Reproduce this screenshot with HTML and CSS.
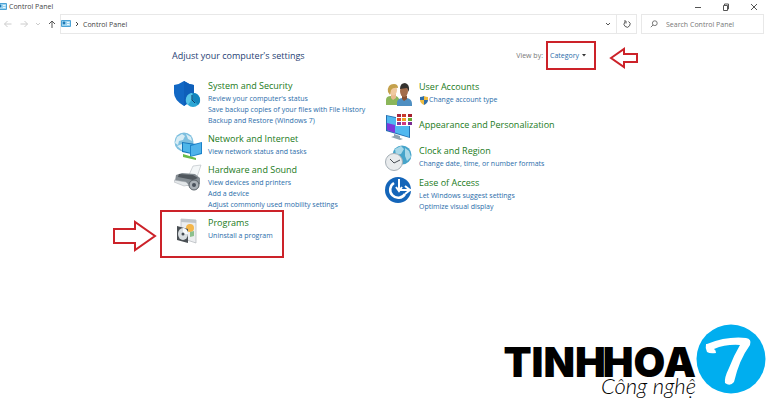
FILE: index.html
```html
<!DOCTYPE html>
<html lang="en">
<head>
<meta charset="UTF-8">
<meta name="viewport" content="width=device-width, initial-scale=1.0">
<title>Control Panel</title>
<link rel="stylesheet" href="styles.css">
</head>
<body>

<!-- shared icon -->
<svg class="defs" width="0" height="0" aria-hidden="true">
    <symbol id="panel" viewBox="0 0 10 8">
        <rect width="10" height="7" rx="1" fill="#4ba3d6"/>
        <rect x="1" y="1" width="8" height="5" fill="#9bd3f0"/>
        <circle cx="3" cy="3" r="1.4" fill="#1f78b4"/>
        <path d="M6 2.5h2.5M6 4.5h2.5" stroke="#fff" stroke-width=".8"/>
    </symbol>
</svg>

<!-- Title bar -->
<header class="titlebar">
    <svg class="panel-icon" width="10" height="8"><use href="#panel"/></svg>
    <span class="window-title">Control Panel</span>
    <div class="window-buttons">
        <button aria-label="Minimize"><svg width="8" height="8"><path d="M1 4.5h6"/></svg></button>
        <button aria-label="Restore"><svg width="8" height="8"><path d="M1.5 2.5h4v5h-4zM2.5 2.5V1h4v5h-1"/></svg></button>
        <button aria-label="Close"><svg width="8" height="8"><path d="M1 1l6 6M7 1l-6 6"/></svg></button>
    </div>
</header>

<!-- Navigation -->
<nav class="navbar">
    <div class="history">
        <button class="off" aria-label="Back"><svg width="8" height="8"><path d="M7.5 4h-7M3.5 1l-3 3 3 3"/></svg></button>
        <button class="off" aria-label="Forward"><svg width="8" height="8"><path d="M.5 4h7M4.5 1l3 3-3 3"/></svg></button>
        <button class="off" aria-label="Recent"><svg width="4" height="8"><path d="M0 3l2 2 2-2"/></svg></button>
        <button aria-label="Up"><svg width="8" height="8"><path d="M4 8V1M1 4l3-3 3 3"/></svg></button>
    </div>
    <div class="address">
        <svg width="10" height="8"><use href="#panel"/></svg>
        <svg class="line" width="4" height="8"><path d="M1 2l2 2-2 2"/></svg>
        <a href="#">Control Panel</a>
        <button class="drop" aria-label="Previous locations"><svg width="6" height="8"><path d="M1 3l2 2 2-2"/></svg></button>
        <button class="refresh" aria-label="Refresh"><svg width="8" height="8"><path d="M5.5 1.5A3 3 0 1 1 2 2M1 1h2v2.5"/></svg></button>
    </div>
    <label class="search">
        <svg class="line" width="8" height="8"><circle cx="4.8" cy="3.2" r="2.4"/><path d="M3 5L.8 7.2"/></svg>
        <input type="text" placeholder="Search Control Panel" aria-label="Search Control Panel">
    </label>
</nav>

<main class="content">
    <div class="heading">
        <h1>Adjust your computer's settings</h1>
        <div class="view">
            <label for="view">View by:</label>
            <div class="marked mark-view">
                <select id="view"><option>Category</option></select>
                <svg class="caret" width="4" height="3"><path d="M0 0h4L2 2.5z"/></svg>
                <svg class="arrow arrow-left" width="30" height="22"><path d="M2 11l13-9v5h13v8H15v5z"/></svg>
            </div>
        </div>
    </div>

    <div class="categories">
        <div class="column">
            <section class="category">
                <svg class="icon" viewBox="0 0 28 28">
                    <path d="M0 6Q6 5 10 2q4 3 10 4v8q0 7-10 13Q0 21 0 14z" fill="#1268c4"/>
                    <path d="M10 2q4 3 10 4v8q0 7-10 13z" fill="#0e5fba"/>
                    <circle cx="19" cy="21" r="7" fill="#2ba6d4"/>
                    <path d="M18 20v-6a7 7 0 0 0-4 12z" fill="#58c5e8"/>
                    <path d="M19 14v7l5 5a7 7 0 0 0-5-12z" fill="#1486bd"/>
                    <path d="M18 16v5l3 3" fill="none" stroke="#123c69"/>
                </svg>
                <div>
                    <h2><a href="#">System and Security</a></h2>
                    <ul>
                        <li><a href="#">Review your computer's status</a></li>
                        <li><a href="#">Save backup copies of your files with File History</a></li>
                        <li><a href="#">Backup and Restore (Windows 7)</a></li>
                    </ul>
                </div>
            </section>

            <section class="category">
                <svg class="icon" viewBox="0 0 28 28">
                    <circle cx="10" cy="10" r="9.5" fill="#7dbfdf"/>
                    <path d="M3 5l5-3 3 2-2 4-4 1-1 4-3-2zM12 2l5 3 1 4-4-2zM3 14l5-2 3 4-2 3z" fill="#d8edf5"/>
                    <path d="M8 10l14 2v11L8 20z" fill="#1676bb"/>
                    <path d="M9 11l12 2v9L9 19z" fill="#4eb6e9"/>
                    <path d="M16 13l12-3v12l-12 3z" fill="#1b82ca"/>
                    <path d="M17 14l10-3v10l-10 3z" fill="#4fb2ea"/>
                    <path d="M9 22l13 4v2L9 25z" fill="#68bb48"/>
                </svg>
                <div>
                    <h2><a href="#">Network and Internet</a></h2>
                    <ul>
                        <li><a href="#">View network status and tasks</a></li>
                    </ul>
                </div>
            </section>

            <section class="category">
                <svg class="icon" viewBox="0 0 28 28">
                    <path d="M15 12l4-9 8-1-4 12z" fill="#f4f7f8" stroke="#b4bbbf" stroke-width=".6"/>
                    <path d="M2 12l6-2 13 1 5 4v6l-5 3-14-3-6-3z" fill="#858d93"/>
                    <path d="M5 11l14 1 5 3-5 2-15-3z" fill="#50575d"/>
                    <path d="M0 17l12 2 3 3-5 1-10-4z" fill="#e4e8ea" stroke="#a5abb0" stroke-width=".5"/>
                    <circle cx="20" cy="22" r="5" fill="#aab1b7" stroke="#596168"/>
                    <circle cx="20" cy="22" r="2" fill="#4a525c"/>
                </svg>
                <div>
                    <h2><a href="#">Hardware and Sound</a></h2>
                    <ul>
                        <li><a href="#">View devices and printers</a></li>
                        <li><a href="#">Add a device</a></li>
                        <li><a href="#">Adjust commonly used mobility settings</a></li>
                    </ul>
                </div>
            </section>

            <section class="category marked mark-programs">
                <svg class="icon" viewBox="0 0 28 28">
                    <path d="M7 3l15 1v23L7 22z" fill="#eceef0" stroke="#b2b6ba" stroke-width=".7"/>
                    <path d="M7 3l15 1v3L7 6z" fill="#bfc5ca"/>
                    <circle cx="16" cy="12" r="4" fill="#f4b64b"/>
                    <path d="M16 16l4-1v5l-4 1z" fill="#8cc08e"/>
                    <path d="M3 10l11 3v14L3 24z" fill="#4a4f54"/>
                    <ellipse cx="9" cy="18" rx="5" ry="6" fill="#d9dee1"/>
                    <path d="M9 12q5 1 5 6H9z" fill="#f9fafb"/>
                    <circle cx="9" cy="18" r="1.5" fill="#464d54"/>
                </svg>
                <div>
                    <h2><a href="#">Programs</a></h2>
                    <ul>
                        <li><a href="#">Uninstall a program</a></li>
                    </ul>
                </div>
                <svg class="arrow arrow-right" width="46" height="32"><path d="M2 9h21V2l20 14-20 14v-7H2z"/></svg>
            </section>
        </div>

        <div class="column">
            <section class="category">
                <svg class="icon" viewBox="0 0 28 28">
                    <path d="M1 25v-5q0-4 5-4h5q4 1 4 9z" fill="#8bb65a"/>
                    <path d="M6 14h5v4l-3 2-2-2z" fill="#e8b98d"/>
                    <ellipse cx="8" cy="10" rx="4" ry="5.5" fill="#f0c9a0"/>
                    <path d="M3 12q-1-8 6-8 4 0 4 4Q8 7 6 10l-1 5z" fill="#c4a14c"/>
                    <path d="M12 26v-4q1-4 6-4h4q5 1 5 6v2z" fill="#4e8fc2"/>
                    <path d="M17 16h5v3l-3 2-2-2z" fill="#855136"/>
                    <ellipse cx="19" cy="11" rx="4" ry="6" fill="#a26c4b"/>
                    <path d="M15 9q0-6 5-6 5 1 4 9l-2-4z" fill="#34322f"/>
                </svg>
                <div>
                    <h2><a href="#">User Accounts</a></h2>
                    <ul>
                        <li>
                            <svg class="shield" width="10" height="10">
                                <path d="M1 2q2 0 4-1v4H1z" fill="#2f6da8"/>
                                <path d="M5 1q2 1 4 1v3H5z" fill="#efbc42"/>
                                <path d="M1 5h4v5Q1 8 1 5z" fill="#efbc42"/>
                                <path d="M5 5h4q0 3-4 5z" fill="#2f6da8"/>
                            </svg>
                            <a href="#">Change account type</a>
                        </li>
                    </ul>
                </div>
            </section>

            <section class="category single">
                <svg class="icon" viewBox="0 0 28 28">
                    <path d="M1 3l24 5v18L1 19z" fill="#236fb2"/>
                    <path d="M2 4l22 5v16L2 18z" fill="#51b8f0"/>
                    <path d="M2 11l8 2v8l-8-3z" fill="#7d38dc"/>
                    <path d="M9 22l6 2v2l3 1-3 1-9-3 3-1z" fill="#8ea4b1"/>
                    <path d="M11 1h17v13H11z" fill="#fff"/>
                    <path d="M12 2h4v3h-4z" fill="#a8283f"/><path d="M17 2h4v3h-4z" fill="#c93a2c"/><path d="M23 2h4v3h-4z" fill="#a62030"/>
                    <path d="M12 6h4v3h-4z" fill="#d9472b"/><path d="M17 6h4v3h-4z" fill="#efa323"/><path d="M23 6h4v3h-4z" fill="#68a832"/>
                    <path d="M12 10h4v3h-4z" fill="#81389f"/><path d="M17 10h4v3h-4z" fill="#d13980"/><path d="M23 10h4v3h-4z" fill="#782c92"/>
                </svg>
                <div>
                    <h2><a href="#">Appearance and Personalization</a></h2>
                </div>
            </section>

            <section class="category">
                <svg class="icon" viewBox="0 0 28 28">
                    <circle cx="17" cy="11" r="9.5" fill="#46a4ca"/>
                    <path d="M10 5l6-3 3 3-3 5-5 1zM20 4l4 3 2 6-4 4-2-5z" fill="#a8d8e8"/>
                    <circle cx="9" cy="18" r="8.5" fill="#e8ebed" stroke="#a5afb6"/>
                    <path d="M5 15l4 4 6-3" fill="none" stroke="#474d54"/>
                </svg>
                <div>
                    <h2><a href="#">Clock and Region</a></h2>
                    <ul>
                        <li><a href="#">Change date, time, or number formats</a></li>
                    </ul>
                </div>
            </section>

            <section class="category">
                <svg class="icon" viewBox="0 0 28 28">
                    <circle cx="13" cy="14" r="13" fill="#1465b9"/>
                    <path d="M9 7a8 8 0 1 0 11 11" fill="none" stroke="#fff" stroke-width="2.5"/>
                    <path d="M14 3v11M11 11l3 4 3-4M14 14h12M20 10l5 4-5 4" fill="none" stroke="#fff" stroke-width="2"/>
                </svg>
                <div>
                    <h2><a href="#">Ease of Access</a></h2>
                    <ul>
                        <li><a href="#">Let Windows suggest settings</a></li>
                        <li><a href="#">Optimize visual display</a></li>
                    </ul>
                </div>
            </section>
        </div>
    </div>
</main>

<!-- Site watermark -->
<div class="watermark">
    <div class="brand">
        <span class="name">TINH<span class="joined">HOA</span></span>
        <span class="tagline">Công nghệ</span>
    </div>
    <svg width="70" height="70" viewBox="0 0 70 70" role="img" aria-label="7">
        <circle cx="35" cy="35" r="34.5" fill="#00aeef"/>
        <path d="M11 20Q31 12 50 14q6 1 4 7-11 15-16 37-4 5-9 1-1-5 4-15 5-13 11-23-14-1-26 4 2 1 2 4-6 1-9-1-2-4-1-8z" fill="#fff"/>
    </svg>
</div>

</body>
</html>
```
FILE: styles.css
```css
* {
    box-sizing: border-box;
}
body {
    margin: 0;
    min-height: 100vh;
    position: relative;
    background-color: #fff;
    color: #444;
    font-family: "Open Sans", "Noto Sans", sans-serif;
    font-size: 7px;
}
svg {
    display: block;
    flex: none;
}
.defs {
    position: absolute;
}
a {
    color: inherit;
    text-decoration: none;
}
a:hover {
    text-decoration: underline;
}
button {
    display: flex;
    align-items: center;
    justify-content: center;
    padding: 0;
    border: none;
    background: none;
    color: #555;
}
button path,
.line {
    fill: none;
    stroke: currentColor;
}

/* title bar */
.titlebar {
    display: flex;
    align-items: center;
    height: 13px;
    padding-right: 10px;
}
.panel-icon {
    margin-left: -3px;
}
.window-title {
    margin-left: 2px;
}
.window-buttons {
    display: flex;
    gap: 20px;
    margin-left: auto;
}

/* navigation */
.navbar {
    display: flex;
    height: 20px;
    margin-top: 1px;
    padding-right: 4px;
}
.history {
    display: flex;
    align-items: center;
    justify-content: space-between;
    width: 60px;
    padding: 0 4px;
}
.history .off {
    color: #ccc;
}
.address {
    display: flex;
    flex: 1;
    align-items: center;
    gap: 4px;
    border: 1px solid #e8e8e8;
}
.drop {
    margin-left: auto;
    margin-right: 1px;
}
.refresh {
    width: 20px;
    height: 100%;
    border-left: 1px solid #e8e8e8;
}
.search {
    display: flex;
    align-items: center;
    gap: 8px;
    width: 123px;
    margin-left: 4px;
    padding-left: 8px;
    border: 1px solid #e8e8e8;
    color: #777;
}
.search input {
    width: 90px;
    padding: 0;
    border: none;
    outline: none;
    background: none;
    font: inherit;
}
.search input::placeholder {
    color: #777;
}

/* content */
.content {
    max-width: 424px;
    margin: 0 auto;
    padding-top: 7px;
}
.heading {
    display: flex;
    align-items: center;
    justify-content: space-between;
    height: 28px;
}
h1 {
    margin: 0;
    color: #1f4173;
    font-size: 9px;
    font-weight: normal;
}
.view {
    display: flex;
    align-items: center;
    gap: 3px;
    color: #777;
}
.marked {
    position: relative;
}
.mark-view {
    display: flex;
    align-items: center;
    width: 50px;
    height: 29px;
    padding-left: 2px;
    border: 2px solid #cc2229;
}
.view select {
    appearance: none;
    width: 32px;
    padding: 0;
    border: none;
    background: none;
    color: #2a6daa;
    font: inherit;
}
.caret {
    fill: #333;
}
.arrow {
    position: absolute;
    fill: none;
    stroke: #cc2229;
    stroke-width: 2;
}
.arrow-left {
    top: 4px;
    left: 61px;
}
.arrow-right {
    top: 4px;
    left: -62px;
}
.mark-programs::after {
    content: "";
    position: absolute;
    top: -6px;
    left: -14px;
    box-sizing: border-box;
    width: 124px;
    height: 48px;
    border: 2px solid #cc2229;
    pointer-events: none;
}
.categories {
    display: grid;
    grid-template-columns: 1fr 1fr;
    padding: 10px 0 0 2px;
}
.column {
    display: flex;
    flex-direction: column;
    gap: 6px;
}
.column + .column {
    gap: 7px;
    padding-top: 1px;
}
.category {
    display: flex;
    gap: 6px;
    min-height: 25px;
}
.single {
    align-items: center;
}
.icon {
    width: 28px;
    height: 28px;
    margin-bottom: -3px;
}
h2 {
    margin: 0;
    color: #217a21;
    font-size: 9px;
    font-weight: normal;
    line-height: 14px;
}
ul {
    margin: 0;
    padding: 0;
    list-style: none;
}
li {
    display: flex;
    align-items: center;
    color: #2a6daa;
    line-height: 11px;
    white-space: nowrap;
}

/* watermark */
.watermark {
    position: absolute;
    right: 2px;
    bottom: 9px;
    display: flex;
    align-items: flex-end;
    color: #000;
}
.brand {
    display: flex;
    flex-direction: column;
    align-items: flex-end;
}
.name {
    font-family: Inter, "Liberation Sans", sans-serif;
    font-size: 41px;
    font-weight: 900;
    line-height: 32px;
}
.joined {
    margin-left: -3px;
}
.tagline {
    font-family: Lato, sans-serif;
    font-size: 22px;
    font-style: italic;
    font-weight: 300;
    line-height: 16px;
}
```
